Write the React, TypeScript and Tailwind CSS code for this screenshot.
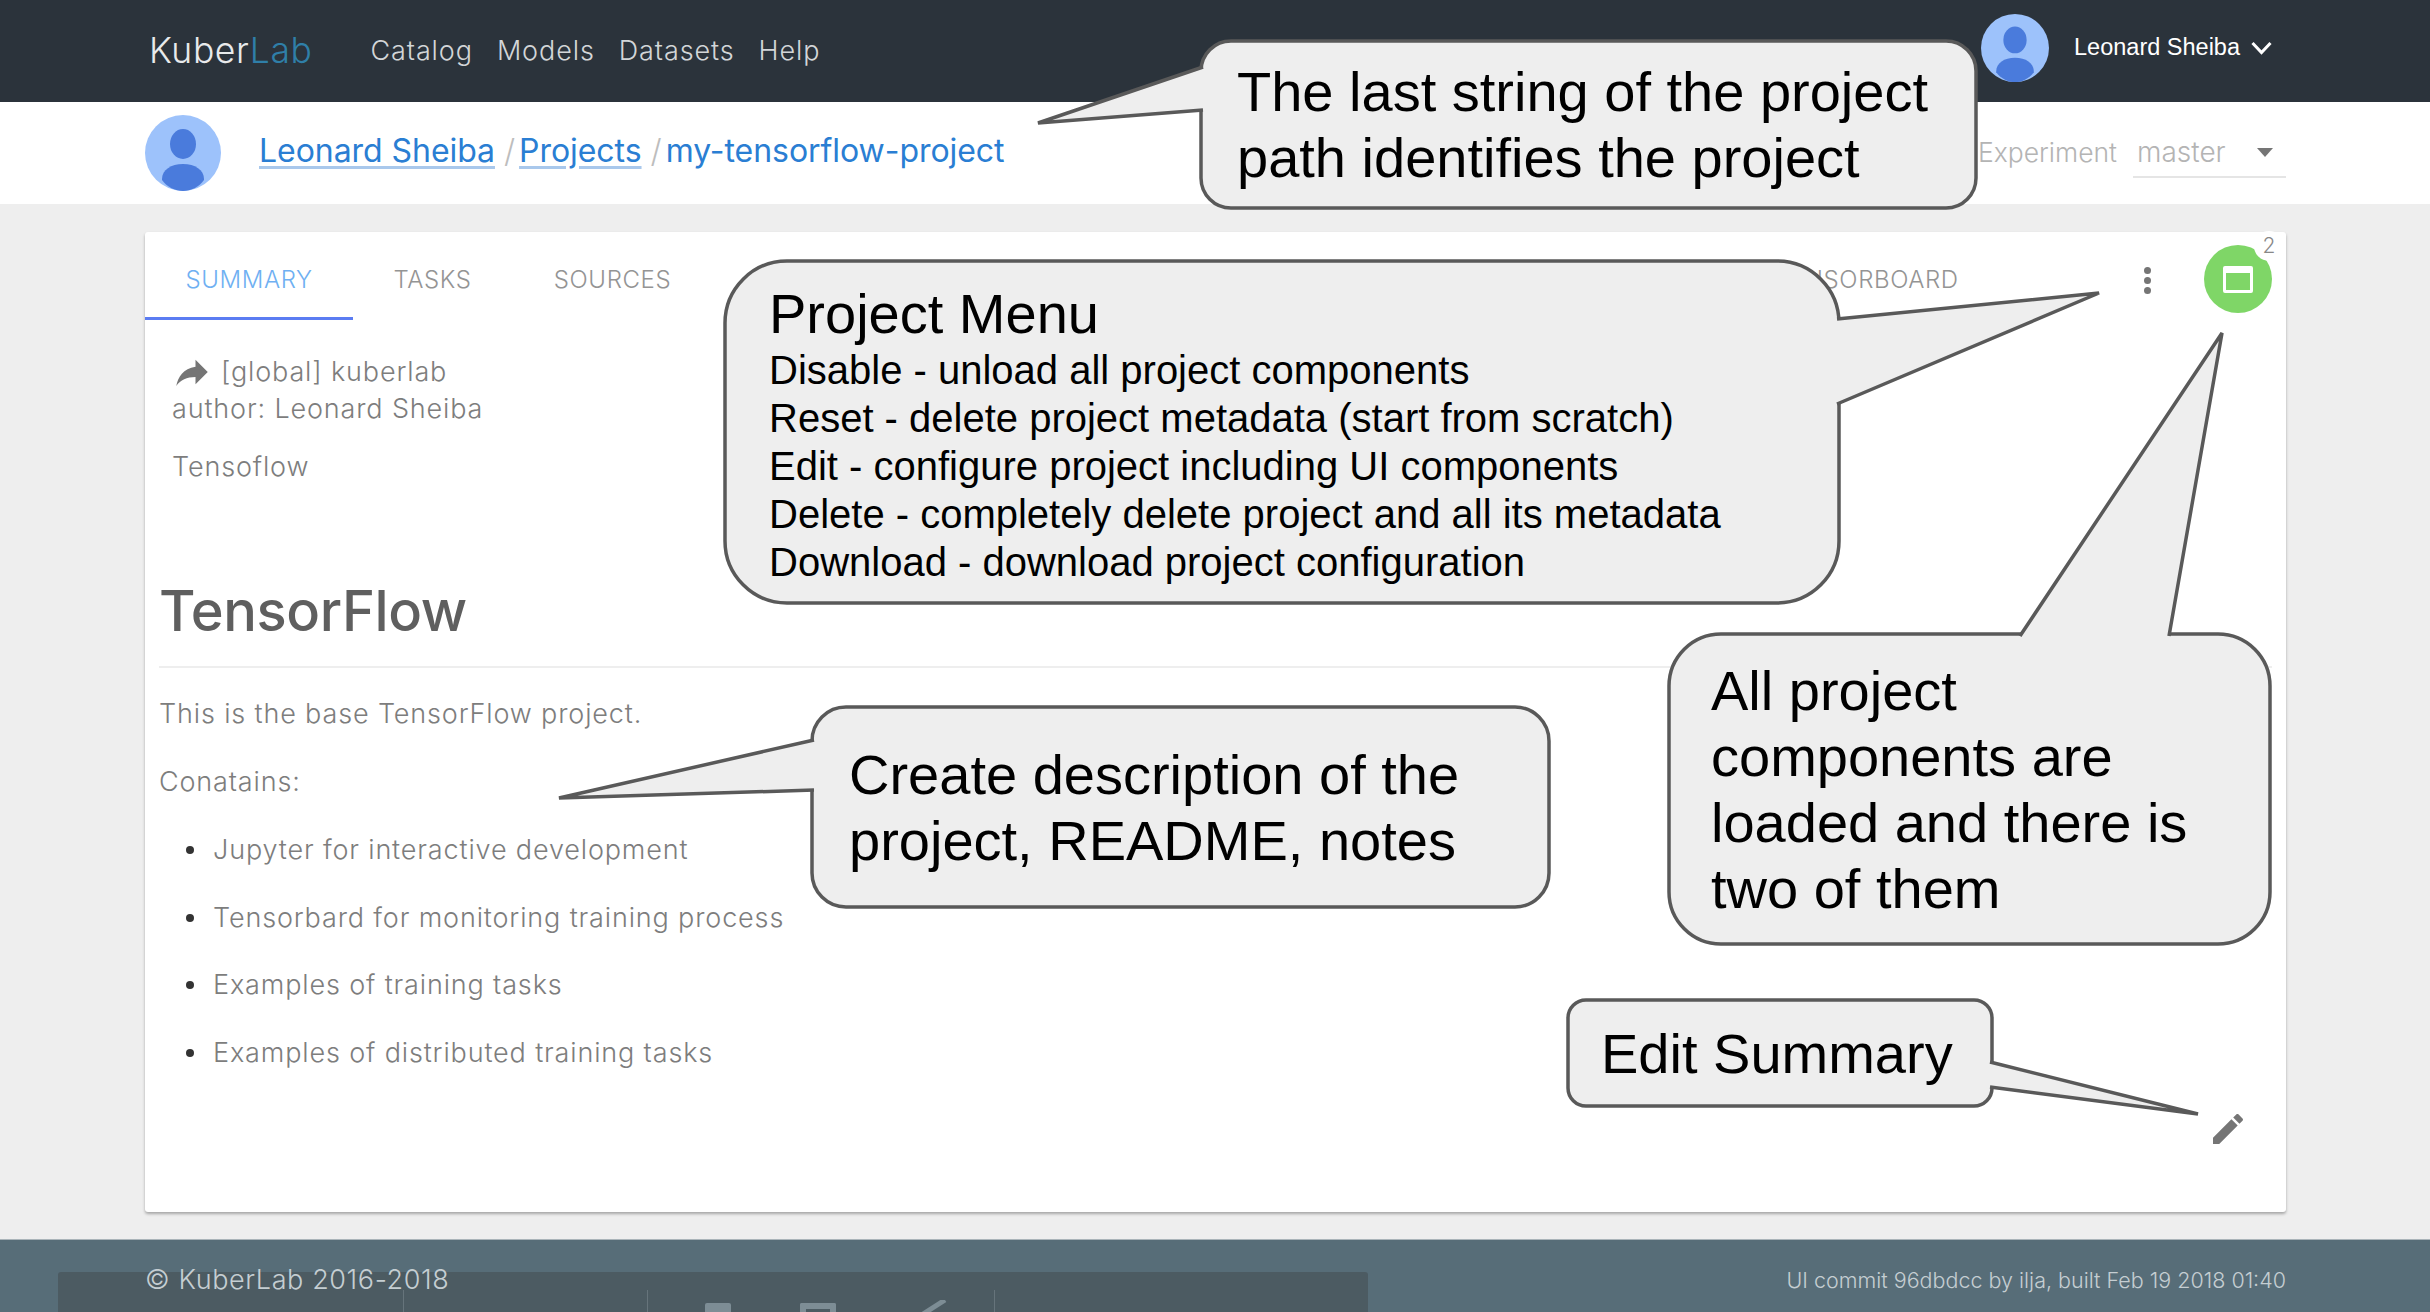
const ui = "font-['Inter','Liberation_Sans',sans-serif]";

const Avatar = ({ size }: { size: string }) => (
  <svg viewBox="0 0 76 76" className={`${size} shrink-0`}>
    <circle cx="38" cy="38" r="38" fill="#9dc2fb" />
    <ellipse cx="38" cy="29" rx="13" ry="15" fill="#4a7bdc" />
    <path d="M38 49c-12 0-21 6-21 15v1c5 7 13 11 21 11s16-4 21-11v-1c0-9-9-15-21-15z" fill="#4a7bdc" />
  </svg>
);

type CalloutProps = {
  left: number;
  top: number;
  width: number;
  height: number;
  tail: string;
  radius: number;
  box: string;
  children: React.ReactNode;
};

// speech bubbles lie over the page, the tail is drawn relative to the page
const Callout = ({ left, top, width, height, tail, radius, box, children }: CalloutProps) => {
  return (
    <div className={`absolute ${box}`}>
      <svg className="absolute left-0 top-0 overflow-visible" width={width} height={height}>
        <rect x="0" y="0" width={width} height={height} rx={radius} ry={radius} fill="#eeeeee" stroke="#595959" strokeWidth="3.5" />
        <g transform={`translate(${-left} ${-top})`}>
          <path d={tail} fill="#eeeeee" stroke="#595959" strokeWidth="3.5" strokeLinejoin="miter" />
        </g>
      </svg>
      <div className="relative h-full w-full text-black font-['Liberation_Sans',sans-serif]">{children}</div>
    </div>
  );
};

const App = () => {
  return (
    <div className={`relative flex h-[1312px] w-full flex-col overflow-hidden bg-[#eeeeee] ${ui}`}>
      <header className="flex h-[102px] shrink-0 items-center justify-between bg-[#2b333b] pl-[149px] pr-[158px]">
        <div className="flex items-center">
          <div className="text-[35.500px] font-light leading-none tracking-[0.6px] text-[#e8eaeb]">
            Kuber<span className="text-[#2f7fa8]">Lab</span>
          </div>
          <nav className="ml-[58px] flex gap-[24px] text-[27px] font-light tracking-[0.9px] text-[#d3d6d8]">
            <span>Catalog</span>
            <span>Models</span>
            <span>Datasets</span>
            <span>Help</span>
          </nav>
        </div>
        <div className="mb-[6px] flex items-center">
          <Avatar size="h-[68px] w-[68px]" />
          <span className="ml-[25px] text-[23.500px] text-white font-['Liberation_Sans',sans-serif]">Leonard Sheiba</span>
          <svg viewBox="0 0 21 14" className="ml-[11px] h-[14px] w-[21px]" fill="none" stroke="#ffffff" strokeWidth="3">
            <path d="M1.500 2l9 9.500 9-9.500" />
          </svg>
        </div>
      </header>

      <div className="flex h-[102px] shrink-0 items-center justify-between bg-white pl-[145px] pr-[144px]">
        <div className="flex items-center text-[32px] tracking-[-0.05px] text-[#2a7ed3]">
          <Avatar size="h-[76px] w-[76px]" />
          <div className="mb-[5px] flex items-center">
            <a className="ml-[38px] underline decoration-[#a9c8ec] underline-offset-4">Leonard Sheiba</a>
            <span className="ml-[9px] mr-[4px] font-light text-[#bdbdbd]">/</span>
            <a className="underline decoration-[#a9c8ec] underline-offset-4">Projects</a>
            <span className="ml-[9px] mr-[4px] font-light text-[#bdbdbd]">/</span>
            <span>my-tensorflow-project</span>
          </div>
        </div>
        <div className="flex items-center font-light text-[#b4b4b4]">
          <span className="text-[26.500px]">Experiment</span>
          <div className="ml-[16px] flex h-[50px] w-[153px] items-center justify-between border-b-2 border-[#e5e5e5] pl-[4px] pr-[13px] text-[28px]">
            <span>master</span>
            <span className="h-0 w-0 border-x-[8px] border-t-[9px] border-x-transparent border-t-[#757575]" />
          </div>
        </div>
      </div>

      <main className="flex-1 pl-[145px] pr-[144px] pt-[28px]">
        <section className="relative h-[980px] rounded-[3px] bg-white shadow-[0_2px_3px_rgba(0,0,0,0.3)]">
          <div className="flex h-[88px] items-start justify-between">
            <div className="flex text-[24px] font-light tracking-[0.6px] text-[#949494]">
              <div className="flex h-[88px] w-[208px] items-center justify-center border-b-[3px] border-[#5b7cf2] pt-[10px] text-[#6fb0f2]">SUMMARY</div>
              <div className="flex h-[88px] w-[159px] items-center justify-center pt-[8px]">TASKS</div>
              <div className="flex h-[88px] w-[201px] items-center justify-center pt-[8px]">SOURCES</div>
              <div className="ml-[1061px] flex h-[88px] items-center pt-[8px]">TENSORBOARD</div>
            </div>
          </div>

          <div className="pl-[27px] pt-[33px] text-[27px] font-light leading-[37px] tracking-[0.85px] text-[#7d7d7d]">
            <div className="flex items-center">
              <svg viewBox="0 0 24 24" className="-my-[3px] -ml-[1px] mr-[8px] h-[42px] w-[42px]" fill="#757575">
                <path d="M14 9V5l7 7-7 7v-4.100c-5 0-8.500 1.600-11 5.100 1-5 4-10 11-11z" />
              </svg>
              [global] kuberlab
            </div>
            <div>author: Leonard Sheiba</div>
            <div className="mt-[21px]">Tensoflow</div>
          </div>

          <div className="px-[14px] pt-[91px] font-light text-[#7d7d7d]">
            <h1 className="text-[56px] font-medium leading-[70px] tracking-[-0.4px] text-[#5f5f5f]">TensorFlow</h1>
            <div className="mt-[20px] border-t-2 border-[#eeeeee] pt-[26px] text-[27px] leading-[40px] tracking-[0.85px]">
              <p>This is the base TensorFlow project.</p>
              <p className="mt-[28px]">Conatains:</p>
              <ul className="mt-[28px] flex flex-col gap-[27.500px] pl-[27px]">
                <li className="flex items-center gap-[19px]"><span className="h-[8px] w-[8px] rounded-full bg-[#333333]" />Jupyter for interactive development</li>
                <li className="flex items-center gap-[19px]"><span className="h-[8px] w-[8px] rounded-full bg-[#333333]" />Tensorbard for monitoring training process</li>
                <li className="flex items-center gap-[19px]"><span className="h-[8px] w-[8px] rounded-full bg-[#333333]" />Examples of training tasks</li>
                <li className="flex items-center gap-[19px]"><span className="h-[8px] w-[8px] rounded-full bg-[#333333]" />Examples of distributed training tasks</li>
              </ul>
            </div>
          </div>

          <div className="absolute left-[1999px] top-[28px] flex h-[40px] flex-col items-center justify-center gap-[3px]">
            <span className="h-[7px] w-[7px] rounded-full bg-[#757575]" />
            <span className="h-[7px] w-[7px] rounded-full bg-[#757575]" />
            <span className="h-[7px] w-[7px] rounded-full bg-[#757575]" />
          </div>
          <div className="absolute left-[2059px] top-[13px] flex h-[68px] w-[68px] items-center justify-center rounded-full bg-[#7fd667]">
            <span className="h-[27px] w-[30px] rounded-[2px] border-[3px] border-t-[7px] border-white" />
          </div>
          <div className="absolute left-[2109px] top-[-1px] flex h-[30px] w-[30px] items-center justify-center rounded-full bg-white text-[21px] font-light text-[#888888]">2</div>
          <svg viewBox="0 0 24 24" className="absolute left-[2063px] top-[877px] h-[40px] w-[40px]" fill="#757575">
            <path d="M3 17.250V21h3.750L17.810 9.940l-3.750-3.750L3 17.250zM20.710 7.040c.39-.39.39-1.020 0-1.410l-2.340-2.340c-.39-.39-1.020-.39-1.410 0l-1.830 1.830 3.750 3.750 1.830-1.830z" />
          </svg>
        </section>
      </main>

      <footer className="relative mt-[27px] flex h-[73px] shrink-0 items-center justify-between border-t border-[#aab4b9] bg-[#576d78] pl-[145px] pr-[144px] pt-[8px] font-light text-[#c5ced2]">
        <div className="absolute bottom-0 left-[58px] h-[40px] w-[1310px] rounded-t-[3px] bg-[#4c5b62]">
          <span className="absolute bottom-0 left-[345px] top-[18px] w-px bg-[#66747b]" />
          <span className="absolute bottom-0 left-[589px] top-[18px] w-px bg-[#66747b]" />
          <span className="absolute bottom-0 left-[936px] top-[18px] w-px bg-[#66747b]" />
          <span className="absolute bottom-0 left-[647px] top-[31px] w-[26px] rounded-t-[2px] bg-[#7d8d95]" />
          <span className="absolute bottom-0 left-[742px] top-[31px] w-[36px] rounded-t-[2px] border-x-[6px] border-t-[6px] border-[#7d8d95]" />
          <svg viewBox="0 0 30 12" className="absolute bottom-0 left-[860px] h-[12px] w-[30px]" fill="none" stroke="#7d8d95" strokeWidth="5">
            <path d="M5 14L27 0" />
          </svg>
        </div>
        <span className="relative text-[27px] tracking-[0.6px]">© KuberLab 2016-2018</span>
        <span className="relative text-[21.500px]">UI commit 96dbdcc by ilja, built Feb 19 2018 01:40</span>
      </footer>

      <Callout left={1201} top={41} width={775} height={167} radius={30} box="left-[1201px] top-[41px] h-[167px] w-[775px]" tail="M1203 67 L1038 123 L1203 110">
        <div className="pl-[36px] pt-[18px] text-[56px] leading-[66px]">
          <div>The last string of the project</div>
          <div>path identifies the project</div>
        </div>
      </Callout>

      <Callout left={725} top={261} width={1114} height={342} radius={62} box="left-[725px] top-[261px] h-[342px] w-[1114px]" tail="M1837 319 L2099 293 L1837 404">
        <div className="pl-[44px] pt-[20px] text-[40px] leading-[48px]">
          <div className="text-[56px] leading-[65px]">Project Menu</div>
          <div>Disable - unload all project components</div>
          <div>Reset - delete project metadata (start from scratch)</div>
          <div>Edit - configure project including UI components</div>
          <div>Delete - completely delete project and all its metadata</div>
          <div>Download - download project configuration</div>
        </div>
      </Callout>

      <Callout left={812} top={707} width={737} height={200} radius={34} box="left-[812px] top-[707px] h-[200px] w-[737px]" tail="M814 740 L559 798 L814 790">
        <div className="pl-[37px] pt-[35px] text-[56px] leading-[66px]">
          <div>Create description of the</div>
          <div>project, README, notes</div>
        </div>
      </Callout>

      <Callout left={1669} top={634} width={601} height={310} radius={52} box="left-[1669px] top-[634px] h-[310px] w-[601px]" tail="M2020 636 L2222 333 L2169 636">
        <div className="pl-[42px] pt-[24px] text-[56px] leading-[66px]">
          <div>All project</div>
          <div>components are</div>
          <div>loaded and there is</div>
          <div>two of them</div>
        </div>
      </Callout>

      <Callout left={1568} top={1000} width={424} height={106} radius={18} box="left-[1568px] top-[1000px] h-[106px] w-[424px]" tail="M1990 1062 L2198 1114 L1990 1087">
        <div className="pl-[33px] pt-[21px] text-[56px] leading-[65px]">Edit Summary</div>
      </Callout>
    </div>
  );
};

export default App;
